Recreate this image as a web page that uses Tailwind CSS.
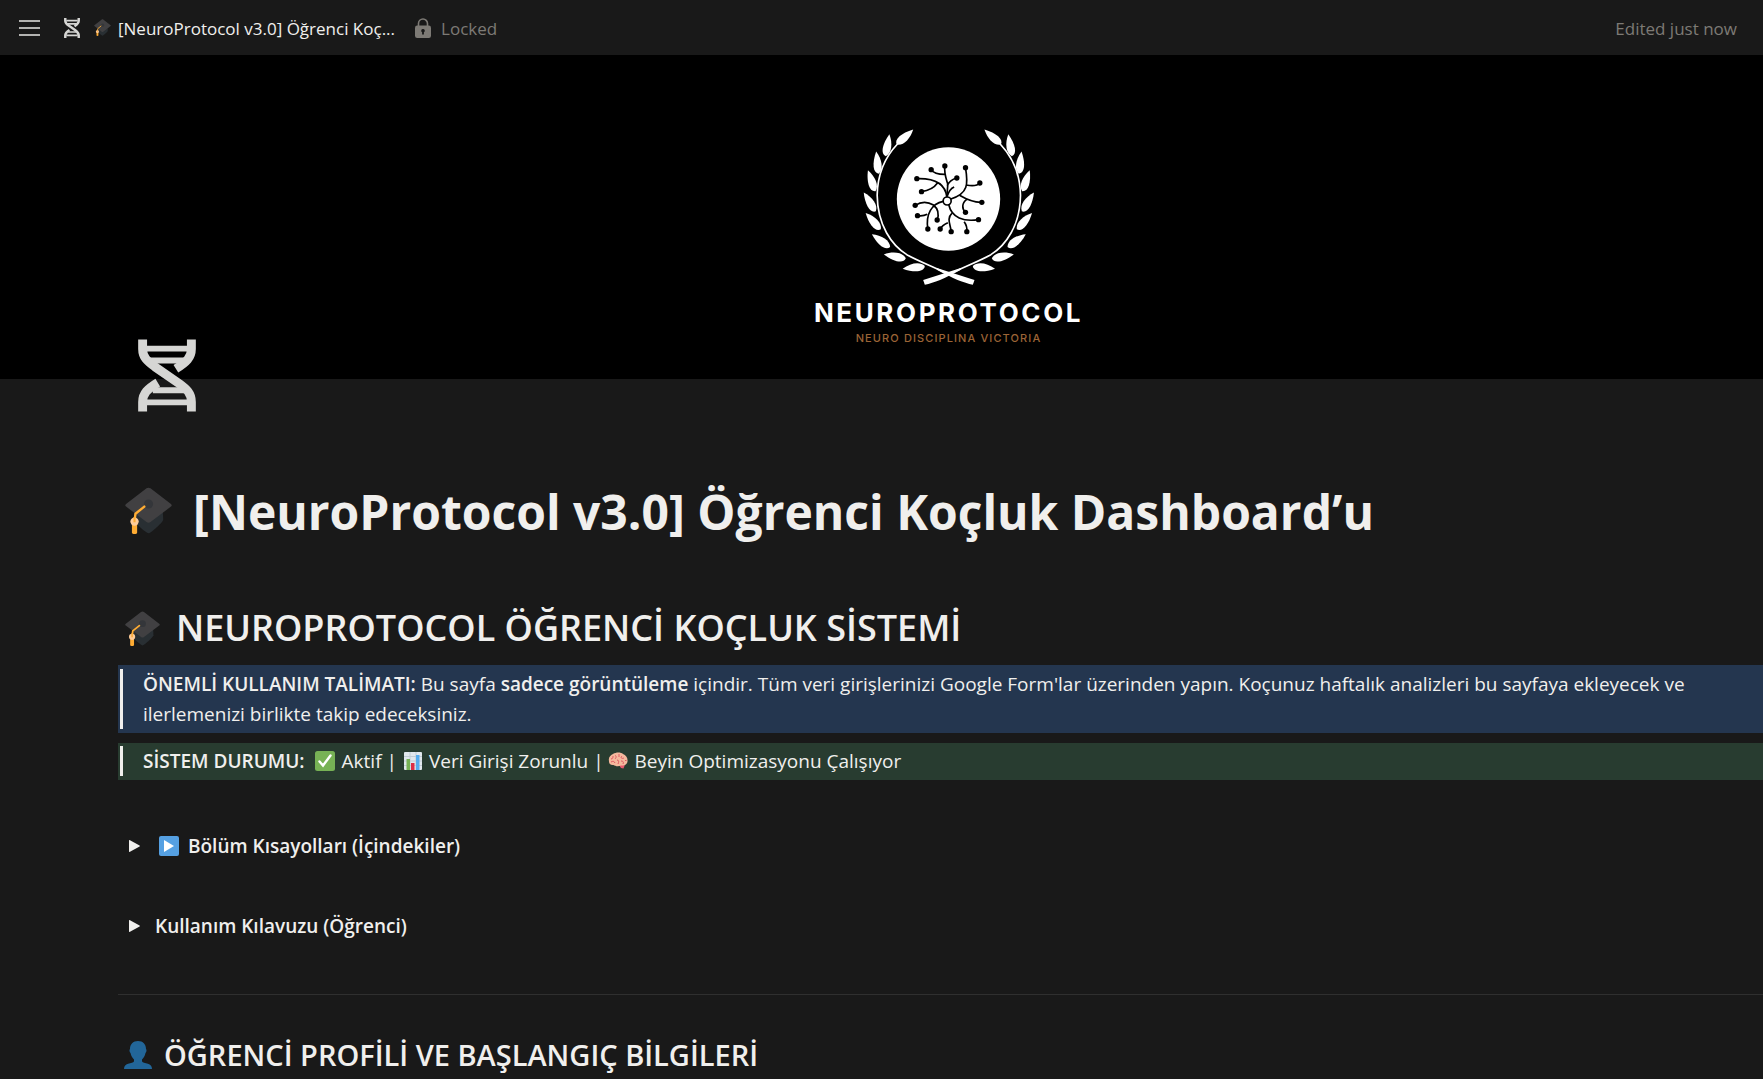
<!DOCTYPE html>
<html lang="tr">
<head>
    <meta charset="UTF-8">
    <meta name="viewport" content="width=device-width, initial-scale=1.0">
    <title>[NeuroProtocol v3.0] Öğrenci Koçluk Dashboard’u</title>
    <script src="https://cdn.jsdelivr.net/npm/@tailwindcss/browser@4"></script>
</head>
<body class="bg-[#191919] text-[#f0efed] font-['Open_Sans','Noto_Sans',sans-serif] text-[19px] leading-[30px] overflow-x-hidden">

    <!-- Shared icons -->
    <svg class="hidden">
        <symbol id="dna" viewBox="115 57 176 219">
            <g fill="none" stroke="currentColor">
                <path stroke-width="27" d="M129 57V86C129 112 144 124 166 140L240 191C262 207 277 220 277 247V276"/>
                <path stroke-width="27" d="M277 57V86C277 112 262 126 230 146"/>
                <path stroke-width="27" d="M129 276V247C129 221 144 207 175 188"/>
                <path stroke-width="18" d="M140 85H266M150 121H256M160 211H256M140 248H266"/>
            </g>
        </symbol>
        <symbol id="cap" viewBox="0 0 36 36">
            <path fill="#292f33" d="M29 19.500L29.300 25C29 27 20 35 18 35.500C16 35 8 28 7.600 26L7 19Z"/>
            <path fill="#414042" d="M18 .5C18.500 .5 19 .7 19.500 1L35.200 13C36 13.700 36 14.400 35.200 15L19.500 26.800C18.500 27.500 17.500 27.500 16.500 26.800L.8 15C0 14.400 0 13.700 .8 13L16.500 1C17 .7 17.500 .5 18 .5Z"/>
            <ellipse cx="18" cy="13" rx="3.500" ry="3.500" fill="#34363a"/>
            <path fill="none" stroke="#ffac33" stroke-width="1.800" stroke-linecap="round" stroke-linejoin="round" d="M14.800 15L8 20.500L7.300 26"/>
            <path fill="#ffac33" d="M5.300 27H9.300V35C9.300 36.300 5.300 36.300 5.300 35Z"/>
            <circle cx="7.300" cy="26.500" r="3.200" fill="#ffcc99"/>
            <path stroke="#ffac33" stroke-width="1.600" d="M7.300 23V27"/>
        </symbol>
    </svg>

    <!-- Top bar -->
    <header class="flex items-center h-[55px] pl-[19px] pr-[26px] text-[17px] leading-6">
        <button type="button" aria-label="Menu" class="shrink-0">
            <svg class="w-[21px] h-4" viewBox="0 0 21 16" fill="none" stroke="#e6e6e4" stroke-width="1.500"><path d="M0 1H21M0 8H21M0 15H21"/></svg>
        </button>
        <a href="#" class="flex items-center ml-6 whitespace-nowrap">
            <svg class="w-4 h-5 text-[#d6d6d4]"><use href="#dna"/></svg>
            <svg class="w-[17px] h-[17px] ml-3.5 mr-[7px]"><use href="#cap"/></svg>
            <span class="pt-0.5">[NeuroProtocol v3.0] Öğrenci Koç...</span>
        </a>
        <div class="flex items-center gap-2.5 ml-5 text-[#7d7a75]">
            <svg class="w-4 h-5" viewBox="0 0 16 20">
                <path fill="none" stroke="currentColor" stroke-width="1.600" d="M3.500 8V5.500a4.500 4.500 0 0 1 9 0V8"/>
                <rect y="7.500" width="16" height="12.500" rx="2.200" fill="currentColor"/>
                <path fill="#191919" d="M8 11a1.700 1.700 0 0 1 .9 3.200V16.500H7.100V14.200A1.700 1.700 0 0 1 8 11Z"/>
            </svg>
            <span class="pt-0.5">Locked</span>
        </div>
        <span class="ml-auto pt-0.5 text-[#7d7a75] whitespace-nowrap">Edited just now</span>
    </header>

    <!-- Cover -->
    <div class="bg-black h-[324px] pl-[134px] pt-[72px] flex flex-col items-center">
        <svg class="w-[177px] h-[160px] shrink-0" viewBox="180 50 530 480" role="img" aria-label="NeuroProtocol">
            <defs>
                <path id="leaf" fill="#fff" d="M0 0C4 -18 34 -17 67 -1C42 14 12 16 0 0Z"/>
                <g id="branch">
                    <use href="#leaf" transform="translate(290 103) rotate(-42)"/>
                    <use href="#leaf" transform="translate(257 138) rotate(-80)"/>
                    <use href="#leaf" transform="translate(236 190) rotate(-96)"/>
                    <use href="#leaf" transform="translate(226 243) rotate(-109)"/>
                    <use href="#leaf" transform="translate(227 303) rotate(-122)"/>
                    <use href="#leaf" transform="translate(242 357) rotate(-132)"/>
                    <use href="#leaf" transform="translate(270 410) rotate(-144)"/>
                    <use href="#leaf" transform="translate(317 444) rotate(-169)"/>
                    <use href="#leaf" transform="translate(374 467) rotate(174)"/>
                    <path fill="none" stroke="#fff" stroke-width="5" d="M292 101C250 145 232 195 231 255C232 345 275 405 320 433C350 450 400 470 448 493"/>
                    <path fill="#fff" d="M410 473L523 509L518 523C490 517 460 505 410 478Z"/>
                </g>
            </defs>
            <use href="#branch"/>
            <use href="#branch" transform="translate(892 0) scale(-1 1)"/>
            <circle cx="445" cy="266" r="155" fill="#fff"/>
            <g fill="none" stroke="#000" stroke-width="5">
                <path d="M440 260C436 225 410 203 350 205M412 218C400 235 385 241 364 244"/>
                <path d="M434 167C431 190 439 208 443 222L440 260M433 192C415 192 400 188 393 178M441 226C448 210 458 206 470 203"/>
                <path d="M441 258C446 242 452 234 462 230M452 266C505 250 504 220 496 172M498 224C520 228 533 225 539 218"/>
                <path d="M478 255C500 268 520 277 545 276M500 267C484 278 485 296 496 306"/>
                <path d="M446 284C455 322 490 335 535 328M492 334C500 345 501 355 500 364M455 309C438 325 452 345 453 364M443 337C432 342 424 348 420 356"/>
                <path d="M429 273C395 280 376 310 383 356M381 312C370 318 360 317 352 316M345 285C365 272 385 275 400 284C414 296 417 312 411 329"/>
                <circle cx="441" cy="272" r="12" fill="#fff"/>
            </g>
            <g fill="#000">
                <circle cx="350" cy="205" r="8"/><circle cx="364" cy="244" r="8"/><circle cx="393" cy="178" r="8"/><circle cx="434" cy="167" r="8"/>
                <circle cx="470" cy="203" r="8"/><circle cx="496" cy="172" r="8"/><circle cx="539" cy="218" r="8"/><circle cx="545" cy="276" r="8"/>
                <circle cx="496" cy="306" r="8"/><circle cx="535" cy="328" r="8"/><circle cx="500" cy="364" r="8"/><circle cx="453" cy="364" r="8"/>
                <circle cx="420" cy="356" r="8"/><circle cx="383" cy="356" r="8"/><circle cx="411" cy="329" r="8"/><circle cx="352" cy="316" r="8"/><circle cx="345" cy="285" r="8"/>
            </g>
        </svg>
        <p class="mt-2 pt-0.5 text-[26px] leading-8 font-bold text-white tracking-widest font-['Inter',sans-serif]">NEUROPROTOCOL</p>
        <p class="mt-px text-[11px] leading-4 font-medium text-[#9c6436] tracking-widest font-['Inter',sans-serif]">NEURO DISCIPLINA VICTORIA</p>
    </div>

    <main class="pl-[118px]">
        <svg class="relative w-[58px] h-[73px] ml-5 -mt-10 text-[#d6d6d4]"><use href="#dna"/></svg>

        <h1 class="flex items-center mt-[66px] ml-[7px] text-5xl leading-[60px] font-bold whitespace-nowrap">
            <svg class="w-[47px] h-[47px] mr-[21px]"><use href="#cap"/></svg>
            <span class="pt-1">[NeuroProtocol v3.0] Öğrenci Koçluk Dashboard’u</span>
        </h1>

        <h2 class="flex items-center mt-[62px] ml-[7px] text-4xl leading-[48px] font-semibold whitespace-nowrap">
            <svg class="w-[35px] h-[35px] mr-4"><use href="#cap"/></svg>
            NEUROPROTOCOL ÖĞRENCİ KOÇLUK SİSTEMİ
        </h2>

        <blockquote class="mt-[13px] py-1 pl-0.5 bg-[#24364f]">
            <p class="border-l-3 border-[#f0efed] pl-5 pr-[60px]"><strong class="font-semibold">ÖNEMLİ KULLANIM TALİMATI:</strong> Bu sayfa <strong class="font-semibold">sadece görüntüleme</strong> içindir. Tüm veri girişlerinizi Google Form'lar üzerinden yapın. Koçunuz haftalık analizleri bu sayfaya ekleyecek ve ilerlemenizi birlikte takip edeceksiniz.</p>
        </blockquote>

        <blockquote class="mt-2.5 pt-[3px] pb-1 pl-0.5 bg-[#283c30]">
            <p class="flex items-center border-l-3 border-[#f0efed] pl-5 whitespace-nowrap">
                <strong class="font-semibold">SİSTEM DURUMU:</strong>
                <svg class="w-5 h-5 ml-2.5 mr-[7px]" viewBox="0 0 20 20"><rect width="20" height="20" rx="2.500" fill="#77b255"/><path d="M4.500 10.500L8 14.500L15.500 4.500" fill="none" stroke="#fff" stroke-width="2.400" stroke-linecap="round"/></svg>
                <span>Aktif |</span>
                <svg class="w-[18px] h-[18px] mx-[7px]" viewBox="0 0 18 18">
                    <rect width="18" height="18" rx="1" fill="#e1e8ed"/>
                    <path stroke="#c2cdd5" d="M0 4.500H18M0 9H18M0 13.500H18M6 0V18M12 0V18"/>
                    <path fill="#77b255" d="M2.500 7h3.500v11H2.500z"/><path fill="#dd2e44" d="M7 11h3.500v7H7z"/><path fill="#55acee" d="M12 3h3.500v15H12z"/>
                </svg>
                <span>Veri Girişi Zorunlu |</span>
                <svg class="w-5 h-[18px] ml-1 mr-[7px]" viewBox="0 0 20 18">
                    <path fill="#ea596e" d="M11 13L17 12.500L15.500 16.500L13 16Z"/>
                    <path fill="#f5b89d" d="M1 9C0 5 3 3 5 2C8 0 13 0 15 2C18 3 20 6 19.500 9.500C19 13 16 13.500 13 13.500C10 15 7 14 5.500 13C2 13.500 .8 11 1 9Z"/>
                    <path fill="none" stroke="#dd5a62" stroke-width="1" d="M3 7C5 7 5 5 5 4M7 3.500C9 4 8 6 7 7M11 2V5M14 4C12 6 14 7 16 6M3 10C5 9 6 9 7 11M9 8C11 8 11 10 10 12M13 9C15 9 16 10 15 12M17 8.500H18.500"/>
                </svg>
                <span>Beyin Optimizasyonu Çalışıyor</span>
            </p>
        </blockquote>

        <!-- Toggles -->
        <button type="button" aria-expanded="false" class="flex items-center mt-[51px] ml-[11px] font-semibold">
            <svg class="w-[11px] h-3 mr-[19px]" viewBox="0 0 11 12" fill="currentColor"><path d="M0 .6C0 0 .5 -.1 1 .2L10.600 5.500C11 5.800 11 6.200 10.600 6.500L1 11.800C.5 12.100 0 12 0 11.400Z"/></svg>
            <svg class="w-5 h-5 mr-[9px]" viewBox="0 0 20 20"><rect width="20" height="20" rx="2" fill="#55a0e2"/><path fill="#fff" d="M5 4L15 10L5 16Z"/></svg>
            Bölüm Kısayolları (İçindekiler)
        </button>
        <button type="button" aria-expanded="false" class="flex items-center mt-[50px] ml-[11px] font-semibold">
            <svg class="w-[11px] h-3 mr-[15px]" viewBox="0 0 11 12" fill="currentColor"><path d="M0 .6C0 0 .5 -.1 1 .2L10.600 5.500C11 5.800 11 6.200 10.600 6.500L1 11.800C.5 12.100 0 12 0 11.400Z"/></svg>
            Kullanım Kılavuzu (Öğrenci)
        </button>

        <hr class="mt-[53px] border-[#2f2f2f]">

        <h3 class="flex items-center mt-[42px] ml-1.5 text-[29px] leading-[36px] font-semibold whitespace-nowrap">
            <svg class="w-[28px] h-[28px] mr-3" viewBox="0 0 28 28" fill="#269"><path d="M14 0C19 0 22 3.500 22 8C22.800 8.500 22.700 11 21.500 12C21 15 19.500 17 18 18.500V20C18 21.500 20 21.800 23 22.500C26.500 23.300 28 25 28 28H0C0 25 1.500 23.300 5 22.500C8 21.800 10 21.500 10 20V18.500C8.500 17 7 15 6.500 12C5.300 11 5.200 8.500 6 8C6 3.500 9 0 14 0Z"/></svg>
            ÖĞRENCİ PROFİLİ VE BAŞLANGIÇ BİLGİLERİ
        </h3>
    </main>
</body>
</html>
